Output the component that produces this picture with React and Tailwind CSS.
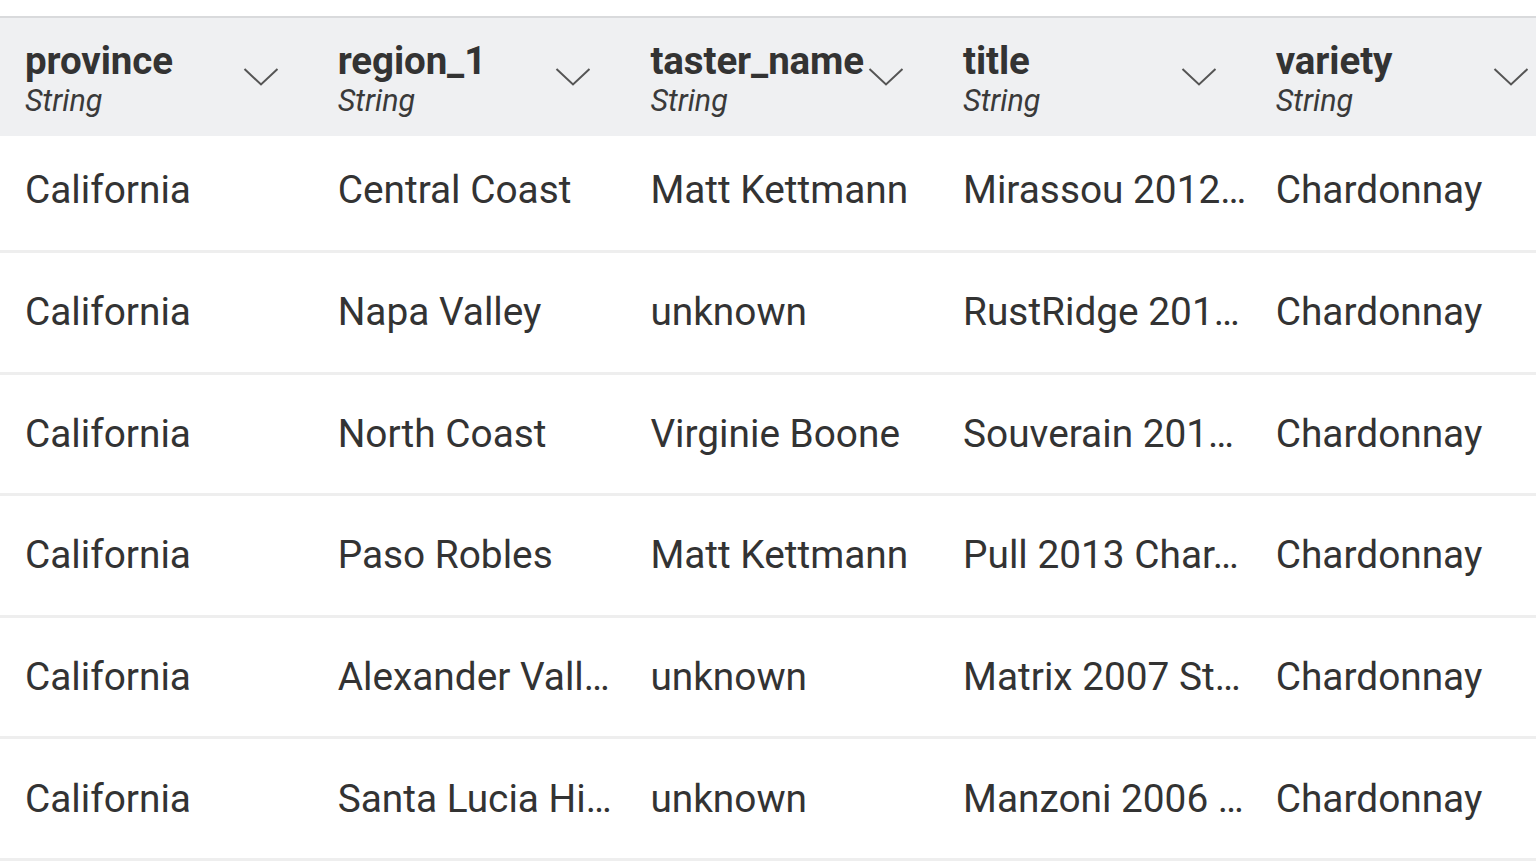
import React from 'react';

const columns = ['province', 'region_1', 'taster_name', 'title', 'variety'];

const rows = [
  ['California', 'Central Coast', 'Matt Kettmann', 'Mirassou 2012…', 'Chardonnay'],
  ['California', 'Napa Valley', 'unknown', 'RustRidge 201…', 'Chardonnay'],
  ['California', 'North Coast', 'Virginie Boone', 'Souverain 201…', 'Chardonnay'],
  ['California', 'Paso Robles', 'Matt Kettmann', 'Pull 2013 Char…', 'Chardonnay'],
  ['California', 'Alexander Vall…', 'unknown', 'Matrix 2007 St…', 'Chardonnay'],
  ['California', 'Santa Lucia Hi…', 'unknown', 'Manzoni 2006 …', 'Chardonnay'],
];

function Chevron() {
  return (
    <svg width="36" height="20" viewBox="0 0 36 20" fill="none" className="shrink-0">
      <path d="M1.5 2 L18 17.5 L34.5 2" stroke="#555" strokeWidth="2" />
    </svg>
  );
}

export default function App() {
  return (
    <div className="w-[1536px] h-[867px] overflow-hidden bg-white pt-4 text-[#333]" style={{ fontFamily: 'Roboto, sans-serif' }}>
      <div className="w-[1564px]">
        {/* header */}
        <div className="flex h-[120px] bg-[#eff0f2] border-t-2 border-[#d9dadc]">
          {columns.map(col => (
            <div key={col} className="w-[312.7px] shrink-0 flex items-center pl-[25px] pr-[34px]">
              <div className="flex-1 min-w-0 flex flex-col pt-[8px]">
                <span className="text-[38.5px] leading-[40px] font-bold tracking-[-0.1px] whitespace-nowrap">{col}</span>
                <span className="text-[30.5px] leading-[40px] italic text-[#3a3a3a]">String</span>
              </div>
              <Chevron />
            </div>
          ))}
        </div>

        {/* rows */}
        {rows.map((row, i) => (
          <div
            key={i}
            className={`flex items-center border-b-[3px] border-[#eeeeee] ${i === 0 ? 'h-[117px] pb-[6px]' : 'h-[121.6px]'}`}
          >
            {row.map((cell, j) => (
              <div key={j} className="w-[312.7px] shrink-0 pl-[25px] pr-[4px] whitespace-nowrap overflow-hidden text-[38.8px] leading-[44px] text-[#333]">
                {cell}
              </div>
            ))}
          </div>
        ))}
      </div>
    </div>
  );
}
